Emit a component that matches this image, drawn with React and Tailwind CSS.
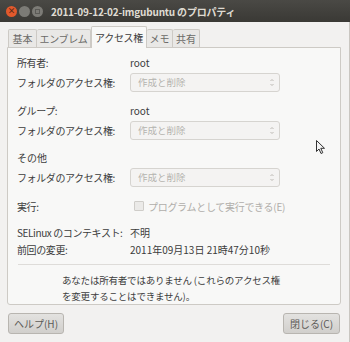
import React from "react";

const font = { fontFamily: '"Noto Sans CJK JP", "Noto Sans", sans-serif' };

function Combo() {
  return (
    <div className="w-[150px] h-[19px] rounded-[3px] border border-[#d6d4d0] bg-[#f4f3f2] flex items-center justify-between pl-[7px] pr-[4px] text-[9.5px] text-[#b5b3af]">
      <span>作成と削除</span>
      <svg width="6" height="9" viewBox="0 0 6 9">
        <path d="M1.5 3 L3 1.5 L4.5 3" stroke="#bdbab5" fill="none" strokeWidth="1" />
        <path d="M1.5 6 L3 7.5 L4.5 6" stroke="#bdbab5" fill="none" strokeWidth="1" />
      </svg>
    </div>
  );
}

function Row({ label, children, className = "" }) {
  return (
    <div className={"flex items-center " + className}>
      <div className="w-[113px] shrink-0 tracking-[-0.4px]">{label}</div>
      {children}
    </div>
  );
}

export default function App() {
  return (
    <div className="relative w-[350px] h-[342px] bg-[#f2f1f0] flex flex-col text-[10px] text-[#3c3c3c] overflow-hidden" style={font}>
      <div className="h-[22px] bg-gradient-to-b from-[#4a4945] to-[#3a3935] flex items-center pl-[6px] shrink-0">
        <div className="flex items-center gap-[2px]">
          <div className="w-[11px] h-[11px] rounded-full bg-[#e2592c] flex items-center justify-center text-[8px] leading-none text-[#5a2a17] font-bold">×</div>
          <div className="w-[11px] h-[11px] rounded-full bg-[#7c7b76]"></div>
          <div className="w-[11px] h-[11px] rounded-full bg-[#7c7b76] flex items-center justify-center">
            <div className="w-[5px] h-[5px] border border-[#5b5a56]"></div>
          </div>
        </div>
        <div className="ml-[8px] text-[10px] font-bold text-[#dfdbd2] tracking-[-0.2px]">2011-09-12-02-imgubuntu のプロパティ</div>
      </div>
      <div className="flex-1 flex flex-col pl-[7px] pr-[8px] border-r border-[#c9c6c1]">
        <div className="flex items-end h-[25px] pl-[1px]">
          <div className="h-[18px] w-[29px] border border-b-0 border-[#cdcac5] bg-[#e9e8e6] rounded-t-[2px] flex items-center justify-center text-[#6b6a66]">基本</div>
          <div className="h-[18px] w-[54px] border border-b-0 border-l-0 border-[#cdcac5] bg-[#e9e8e6] rounded-t-[2px] flex items-center justify-center text-[#6b6a66] tracking-[-0.3px]">エンブレム</div>
          <div className="h-[22px] w-[56px] border border-b-0 border-[#cdcac5] bg-[#f8f8f7] rounded-t-[2px] flex items-center justify-center text-[#3c3c3c] relative top-[1px] tracking-[-0.3px]">アクセス権</div>
          <div className="h-[18px] w-[26px] border border-b-0 border-l-0 border-[#cdcac5] bg-[#e9e8e6] rounded-t-[2px] flex items-center justify-center text-[#6b6a66]">メモ</div>
          <div className="h-[18px] w-[27px] border border-b-0 border-l-0 border-[#cdcac5] bg-[#e9e8e6] rounded-t-[2px] flex items-center justify-center text-[#6b6a66]">共有</div>
        </div>
        <div className="h-[258px] bg-[#f8f8f7] border border-[#cdcac5] rounded-b-[3px] pl-[9px] pr-[9px] pt-[5px] flex flex-col">
          <Row label="所有者:" className="h-[18px]"><span>root</span></Row>
          <Row label="フォルダのアクセス権:" className="h-[22px]"><Combo /></Row>
          <Row label="グループ:" className="h-[18px] mt-[8px]"><span>root</span></Row>
          <Row label="フォルダのアクセス権:" className="h-[22px]"><Combo /></Row>
          <div className="h-[18px] mt-[7px] flex items-center">その他</div>
          <Row label="フォルダのアクセス権:" className="h-[22px]"><Combo /></Row>
          <Row label="実行:" className="h-[18px] mt-[9px]">
            <div className="flex items-center text-[#b0aeaa] ml-[4px] tracking-[-0.3px]">
              <div className="w-[10px] h-[10px] border border-[#cfcdc9] bg-[#ebeae8] rounded-[1px] mr-[4px]"></div>
              <span>プログラムとして実行できる(E)</span>
            </div>
          </Row>
          <Row label="SELinux のコンテキスト:" className="h-[18px] mt-[8px]"><span>不明</span></Row>
          <Row label="前回の変更:" className="h-[17px]"><span>2011年09月13日 21時47分10秒</span></Row>
          <div className="border-t border-[#dedcd9] mt-[6px] mx-[1px]"></div>
          <div className="pl-[45px] pt-[7px] leading-[16px] text-[9.5px] tracking-[-0.2px]">
            <div>あなたは所有者ではありません (これらのアクセス権</div>
            <div>を変更することはできません)。</div>
          </div>
        </div>
        <div className="flex justify-between items-center mt-[8px] pl-[1px] pr-[1px]">
          <div className="w-[56px] h-[21px] rounded-[3px] border border-[#b8b5b0] bg-gradient-to-b from-[#e3e2e0] to-[#d1cfcc] flex items-center justify-center text-[10px] text-[#5c5b58]">ヘルプ(H)</div>
          <div className="w-[57px] h-[21px] rounded-[3px] border border-[#b8b5b0] bg-gradient-to-b from-[#e3e2e0] to-[#d1cfcc] flex items-center justify-center text-[10px] text-[#5c5b58]">閉じる(C)</div>
        </div>
      </div>
      <div className="absolute left-[316px] top-[140px]">
        <svg width="10" height="15" viewBox="0 0 10 15">
          <path d="M0.5 0.5 L0.5 11.5 L3 9 L5 13.5 L6.8 12.7 L4.8 8.3 L8.5 8.3 Z" fill="#f4f4f4" stroke="#333" strokeWidth="1" />
        </svg>
      </div>
    </div>
  );
}
